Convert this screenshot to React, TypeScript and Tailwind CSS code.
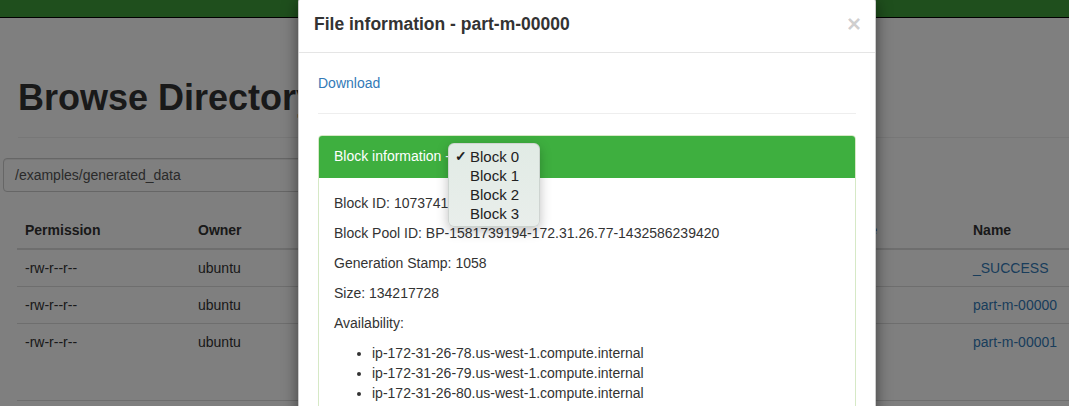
import React from 'react';

interface FileRow {
  permission: string;
  owner: string;
  group: string;
  size: string;
  modified: string;
  replication: number;
  blockSize: string;
  name: string;
}

const files: FileRow[] = [
  { permission: "-rw-r--r--", owner: "ubuntu", group: "supergroup", size: "0 B", modified: "5/25/2015, 8:37 PM", replication: 3, blockSize: "128 MB", name: "_SUCCESS" },
  { permission: "-rw-r--r--", owner: "ubuntu", group: "supergroup", size: "476.84 MB", modified: "5/25/2015, 8:37 PM", replication: 3, blockSize: "128 MB", name: "part-m-00000" },
  { permission: "-rw-r--r--", owner: "ubuntu", group: "supergroup", size: "476.84 MB", modified: "5/25/2015, 8:37 PM", replication: 3, blockSize: "128 MB", name: "part-m-00001" },
];

const hosts = [
  "ip-172-31-26-78.us-west-1.compute.internal",
  "ip-172-31-26-79.us-west-1.compute.internal",
  "ip-172-31-26-80.us-west-1.compute.internal",
];

const blocks = ["Block 0", "Block 1", "Block 2", "Block 3"];

const BrowsePage: React.FC = () => (
  <div className="w-full">
    <nav className="h-[18px] bg-[#3e9e3a] border-b border-black" />
    <div className="pl-[18px] pt-[40px]">
      <div className="pb-[9px] border-b border-[#eee] mb-[20px]">
        <h1 className="mt-[20px] mb-[10px] text-[36px] leading-[40px] font-bold text-[#333]">Browse Directory</h1>
      </div>
    </div>
    <div className="ml-[3px] w-[860px] h-[34px] border border-[#ccc] rounded-[4px] px-[11px] flex items-center text-[14px] text-[#555] shadow-[inset_0_1px_1px_rgba(0,0,0,0.075)]">
      /examples/generated_data
    </div>
    <div className="pl-[17px] mt-[20px]">
      <table className="table-fixed w-[1100px] text-[14px] text-[#333] border-collapse">
        <colgroup>
          <col className="w-[173px]" />
          <col className="w-[110px]" />
          <col className="w-[100px]" />
          <col className="w-[80px]" />
          <col className="w-[200px]" />
          <col className="w-[119px]" />
          <col className="w-[166px]" />
          <col />
        </colgroup>
        <thead>
          <tr className="text-left">
            {["Permission", "Owner", "Group", "Size", "Last Modified", "Replication", "Block Size", "Name"].map(h => (
              <th key={h} className="p-[8px] leading-[20px] font-bold whitespace-nowrap overflow-hidden border-b-2 border-[#ddd]">{h}</th>
            ))}
          </tr>
        </thead>
        <tbody>
          {files.map(f => (
            <tr key={f.name} className="border-t border-[#ddd] whitespace-nowrap">
              <td className="p-[8px] leading-[20px] overflow-hidden">{f.permission}</td>
              <td className="p-[8px] leading-[20px] overflow-hidden">{f.owner}</td>
              <td className="p-[8px] leading-[20px] overflow-hidden">{f.group}</td>
              <td className="p-[8px] leading-[20px] overflow-hidden">{f.size}</td>
              <td className="p-[8px] leading-[20px] overflow-hidden">{f.modified}</td>
              <td className="p-[8px] leading-[20px] overflow-hidden">{f.replication}</td>
              <td className="p-[8px] leading-[20px] overflow-hidden">{f.blockSize}</td>
              <td className="p-[8px] leading-[20px] overflow-hidden text-[#337ab7]">{f.name}</td>
            </tr>
          ))}
        </tbody>
      </table>
      <div className="mt-[40px] border-t border-[#ddd]" />
    </div>
  </div>
);

const FileModal: React.FC = () => (
  <div className="absolute left-[298px] top-[-4px] w-[578px] bg-white border border-black/20 rounded-[6px] shadow-[0_5px_15px_rgba(0,0,0,0.5)] z-20">
    <div className="px-[15px] py-[15px] border-b border-[#e5e5e5] flex items-start justify-between">
      <h4 className="text-[17.5px] leading-[25px] font-bold text-[#333]">File information - part-m-00000</h4>
      <button className="text-[24px] leading-[21px] font-bold text-black/20 mt-[1px] -mr-[1px]">×</button>
    </div>
    <div className="px-[19px] pt-[20px]">
      <a className="block text-[14px] leading-[20px] text-[#337ab7]">Download</a>
      <hr className="mt-[20px] mb-[21px] border-t border-[#eee]" />
      <div className="border border-[#d6e9c6] rounded-[4px] h-[300px]">
        <div className="relative bg-[#3eaf3f] px-[15px] py-[10px] border-b border-[#3eaf3f] rounded-t-[3px] text-[14px] leading-[21px] text-white">
          Block information -
          <div className="absolute left-[129px] top-[7px] w-[92px] rounded-[6px] border border-black/10 bg-gradient-to-b from-[#e1ebe5] to-[#e9eeeb] shadow-[0_4px_12px_rgba(0,0,0,0.25)] py-[3px] text-[15px] leading-[19px] text-[#222]">
            {blocks.map((b, i) => (
              <div key={b} className="h-[19px] flex items-center">
                <span className="w-[21px] pl-[6px] text-[14px] font-bold">{i === 0 ? "✓" : ""}</span>
                <span>{b}</span>
              </div>
            ))}
          </div>
        </div>
        <div className="p-[15px] text-[14px] leading-[20px] text-[#333]">
          <p className="mb-[10px]">Block ID: 1073741825</p>
          <p className="mb-[10px]">Block Pool ID: BP-1581739194-172.31.26.77-1432586239420</p>
          <p className="mb-[10px]">Generation Stamp: 1058</p>
          <p className="mb-[10px]">Size: 134217728</p>
          <p className="mb-[10px]">Availability:</p>
          <ul className="list-disc pl-[38px]">
            {hosts.map(h => (
              <li key={h}>{h}</li>
            ))}
          </ul>
        </div>
      </div>
    </div>
  </div>
);

const App: React.FC = () => {
  return (
    <div className="relative w-[1069px] h-[406px] overflow-hidden bg-white font-['Liberation_Sans',Helvetica,Arial,sans-serif]">
      <BrowsePage />
      <div className="absolute inset-0 bg-black/50 z-10" />
      <FileModal />
    </div>
  );
};

export default App;
